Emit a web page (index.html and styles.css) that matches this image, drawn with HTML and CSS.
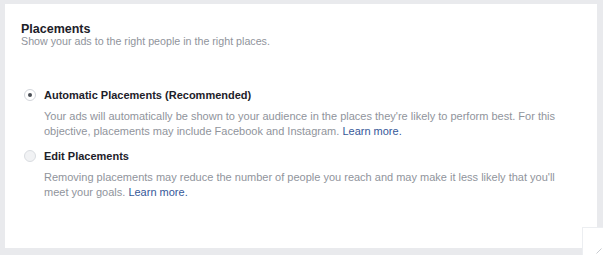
FILE: index.html
```html
<!DOCTYPE html>
<html>
<head>
<meta charset="utf-8">
<link rel="stylesheet" href="styles.css">
</head>
<body>
<div class="card">
  <div class="header">
    <div class="title">Placements</div>
    <div class="subtitle">Show your ads to the right people in the right places.</div>
  </div>
  <div class="options">
    <div class="option">
      <span class="radio checked"></span>
      <div class="option-body">
        <div class="label">Automatic Placements (Recommended)</div>
        <div class="desc">Your ads will automatically be shown to your audience in the places they're likely to perform best. For this objective, placements may include Facebook and Instagram. <a href="#">Learn more.</a></div>
      </div>
    </div>
    <div class="option">
      <span class="radio"></span>
      <div class="option-body">
        <div class="label">Edit Placements</div>
        <div class="desc">Removing placements may reduce the number of people you reach and may make it less likely that you'll meet your goals. <a href="#">Learn more.</a></div>
      </div>
    </div>
  </div>
</div>
<div class="corner">
  <svg width="6" height="6" viewBox="0 0 6 6"><line x1="0.5" y1="5.5" x2="5.5" y2="0.5" stroke="#c9ccd1" stroke-width="1"/></svg>
</div>
</body>
</html>
```
FILE: styles.css
```css
html, body {
  margin: 0;
  padding: 0;
}
body {
  background: #e9eaed;
  width: 603px;
  height: 255px;
  overflow: hidden;
  position: relative;
  font-family: "Liberation Sans", Arial, Helvetica, sans-serif;
  font-size: 11px;
  color: #1d2129;
}
.card {
  background: #fff;
  margin: 4px 6px 0 5px;
  height: 244px;
  box-sizing: border-box;
  padding: 19px 16px 0 16px;
}
.title {
  font-weight: bold;
  font-size: 12.5px;
  line-height: 13px;
  color: #1d2129;
}
.subtitle {
  margin-top: -1px;
  font-size: 10.7px;
  line-height: 13px;
  color: #90949c;
}
.options {
  margin-top: 40px;
  display: flex;
  flex-direction: column;
  gap: 10px;
}
.option {
  display: flex;
  align-items: flex-start;
}
.radio {
  width: 12px;
  height: 12px;
  box-sizing: border-box;
  border-radius: 50%;
  border: 1px solid #dadde1;
  background: #f1f2f4;
  margin: 1px 8px 0 3px;
  flex: none;
  position: relative;
}
.radio.checked {
  background: #fff;
  border-color: #d3d6db;
}
.radio.checked::after {
  content: "";
  position: absolute;
  left: 3px;
  top: 3px;
  width: 4px;
  height: 4px;
  border-radius: 50%;
  background: #4b4f56;
}
.label {
  font-weight: bold;
  font-size: 11px;
  line-height: 14px;
  color: #1d2129;
}
.desc {
  margin-top: 7px;
  font-size: 11px;
  line-height: 15px;
  color: #90949c;
  max-width: 525px;
}
.desc a {
  color: #365899;
  text-decoration: none;
}
.corner {
  position: absolute;
  left: 582px;
  top: 227px;
  width: 21px;
  height: 28px;
  background: #fff;
  border-left: 1px solid #eceef1;
  border-top: 1px solid #eceef1;
  display: flex;
  align-items: flex-end;
  justify-content: flex-end;
}
.corner svg {
  display: block;
  margin: 0 2px 2px 0;
}
```
